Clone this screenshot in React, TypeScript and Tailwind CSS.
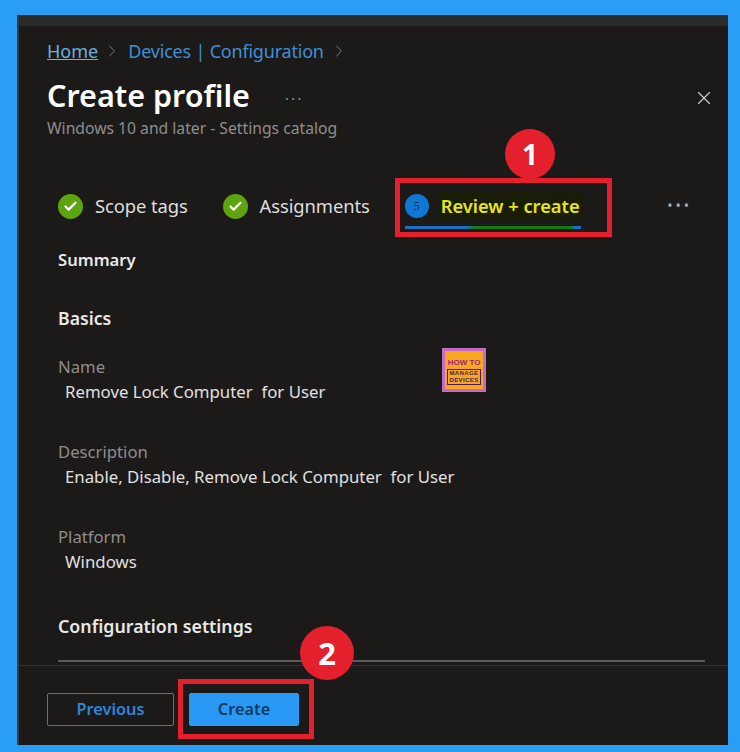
import { Check, ChevronRight, X } from 'lucide-react';

const font = { fontFamily: '"Noto Sans", "Open Sans", sans-serif' };

function DoneStep({ label }: { label: string }) {
  return (
    <div className="flex items-center gap-[12px]">
      <span className="flex h-[25px] w-[25px] items-center justify-center rounded-full bg-[#5da40f]">
        <Check className="h-[15px] w-[15px] text-white" strokeWidth={3.5} />
      </span>
      <span className="text-[18.4px] leading-none tracking-[-0.1px] text-[#dedede]">{label}</span>
    </div>
  );
}

function Field({ label, value, className }: { label: string; value: string; className: string }) {
  return (
    <div className={className}>
      <div className="text-[16.7px] leading-[24px] text-[#8f8d8b]">{label}</div>
      <div className="whitespace-pre pl-[7px] pt-[1px] text-[16.8px] leading-[24px] text-[#e0e0e0]">{value}</div>
    </div>
  );
}

function Badge({ n, className }: { n: number; className: string }) {
  return (
    <span className={`absolute flex items-center justify-center rounded-full bg-[#e3202c] font-bold text-white ${className}`}>
      {n}
    </span>
  );
}

export default function App() {
  return (
    <div style={font} className="h-[752px] w-[740px] overflow-hidden bg-[#2a9df4] pl-[17px] pr-[12px] pt-[15px] pb-[7px]">
      <div className="relative flex h-[730px] flex-col border-l-[2px] border-[#3a3a3a] bg-[#1b1a19]">
        <div className="h-[11px] bg-[#2b2b2b]" />

        {/* Header */}
        <div className="pl-[28px] pr-[13px]">
          <div className="mt-[12px] flex h-[26px] items-center text-[18px] leading-none">
            <span className="text-[#6bb0e0] underline">Home</span>
            <ChevronRight className="ml-[4px] mr-[6px] h-[20px] w-[20px] text-[#8f8d8b]" strokeWidth={1} />
            <span className="tracking-[-0.2px] text-[#3f8fd6]">Devices | Configuration</span>
            <ChevronRight className="ml-[5px] h-[20px] w-[20px] text-[#8f8d8b]" strokeWidth={1} />
          </div>
          <div className="mt-[11px] flex h-[40px] items-center">
            <h1 className="text-[30.5px] font-semibold leading-none text-white">Create profile</h1>
            <span className="ml-[35px] text-[14px] leading-none tracking-[2.5px] text-[#9a9a9a]">...</span>
            <X className="ml-auto mt-[6px] h-[22px] w-[22px] text-[#d0d0d0]" strokeWidth={1.25} />
          </div>
          <div className="mt-[3px] text-[15.7px] leading-[20px] text-[#8f8d8b]">Windows 10 and later - Settings catalog</div>
        </div>

        {/* Wizard steps */}
        <div className="relative mt-[46px] flex h-[44px] items-center pl-[39px] pr-[36px]">
          <DoneStep label="Scope tags" />
          <div className="ml-[35px]">
            <DoneStep label="Assignments" />
          </div>
          <div className="relative ml-[35px] flex h-[44px] items-center">
            <span className="flex h-[24px] w-[24px] items-center justify-center rounded-full bg-[#0f78d4] text-[12px] text-[#0b2f55]" style={{ fontFamily: '"Liberation Serif", serif' }}>5</span>
            <span className="ml-[8px] rounded-[4px] bg-[#1a1d06] px-[4px] py-[5px] text-[18.3px] font-semibold leading-none text-[#e6e619]">Review + create</span>
            <span className="absolute bottom-[-1px] left-0 h-[3px] w-[176px] bg-[linear-gradient(90deg,#1a6fc4_35%,#16780f_40%,#16780f_95%,#1a6fc4_96%)]" />
          </div>
          <span className="ml-auto text-[14px] leading-none tracking-[3px] text-[#a8a8a8]">•••</span>
          <div className="absolute left-[376px] top-[-6px] h-[59px] w-[217px] border-[5px] border-[#e3202c]" />
          <Badge n={1} className="left-[486px] top-[-55px] h-[50px] w-[50px] text-[28px]" />
        </div>

        {/* Summary */}
        <div className="relative flex-1 pl-[39px] pr-[23px]">
          <div className="mt-[20px] text-[16.6px] font-semibold leading-[24px] text-[#e8e8e8]">Summary</div>
          <div className="mt-[34px] text-[17.7px] font-semibold leading-[24px] text-[#e8e8e8]">Basics</div>
          <Field className="mt-[25px]" label="Name" value="Remove Lock Computer  for User" />
          <Field className="mt-[36px]" label="Description" value="Enable, Disable, Remove Lock Computer  for User" />
          <Field className="mt-[36px]" label="Platform" value="Windows" />
          <div className="mt-[40px] text-[17.8px] font-semibold leading-[24px] text-[#e8e8e8]">Configuration settings</div>
          <div className="mt-[22px] h-[2px] bg-[#5a5a5a]" />

          {/* Watermark logo */}
          <div className="absolute left-[423px] top-[120px] flex h-[44px] w-[44px] flex-col items-center justify-center bg-[#c56ac9] p-[3px]">
            <div className="flex h-full w-full flex-col items-center justify-center bg-[#f7a71e]">
              <span className="text-[8px] font-bold leading-[13px] text-[#a01f86]" style={{ fontFamily: '"Liberation Sans", sans-serif' }}>HOW TO</span>
              <span className="border border-[#4b1a5a] px-[1px] text-center text-[6px] font-bold leading-[7px] tracking-[0.4px] text-[#4b1a5a]" style={{ fontFamily: '"Liberation Sans", sans-serif' }}>MANAGE<br />DEVICES</span>
            </div>
          </div>
        </div>

        {/* Footer */}
        <div className="relative flex h-[80px] items-center gap-[15px] border-t border-[#333] pt-[7px] pl-[28px]">
          <button className="h-[33px] w-[127px] rounded-[2px] border border-[#2f7fc4] text-[16.3px] font-semibold text-[#2f86d6]">Previous</button>
          <button className="h-[33px] w-[110px] rounded-[2px] bg-[#2899f5] text-[16.3px] font-semibold text-[#123a66]">Create</button>
          <div className="absolute left-[159px] top-[13px] h-[60px] w-[136px] border-[5px] border-[#e3202c]" />
          <Badge n={2} className="left-[281px] top-[-40px] h-[54px] w-[54px] text-[31px]" />
        </div>
      </div>
    </div>
  );
}
